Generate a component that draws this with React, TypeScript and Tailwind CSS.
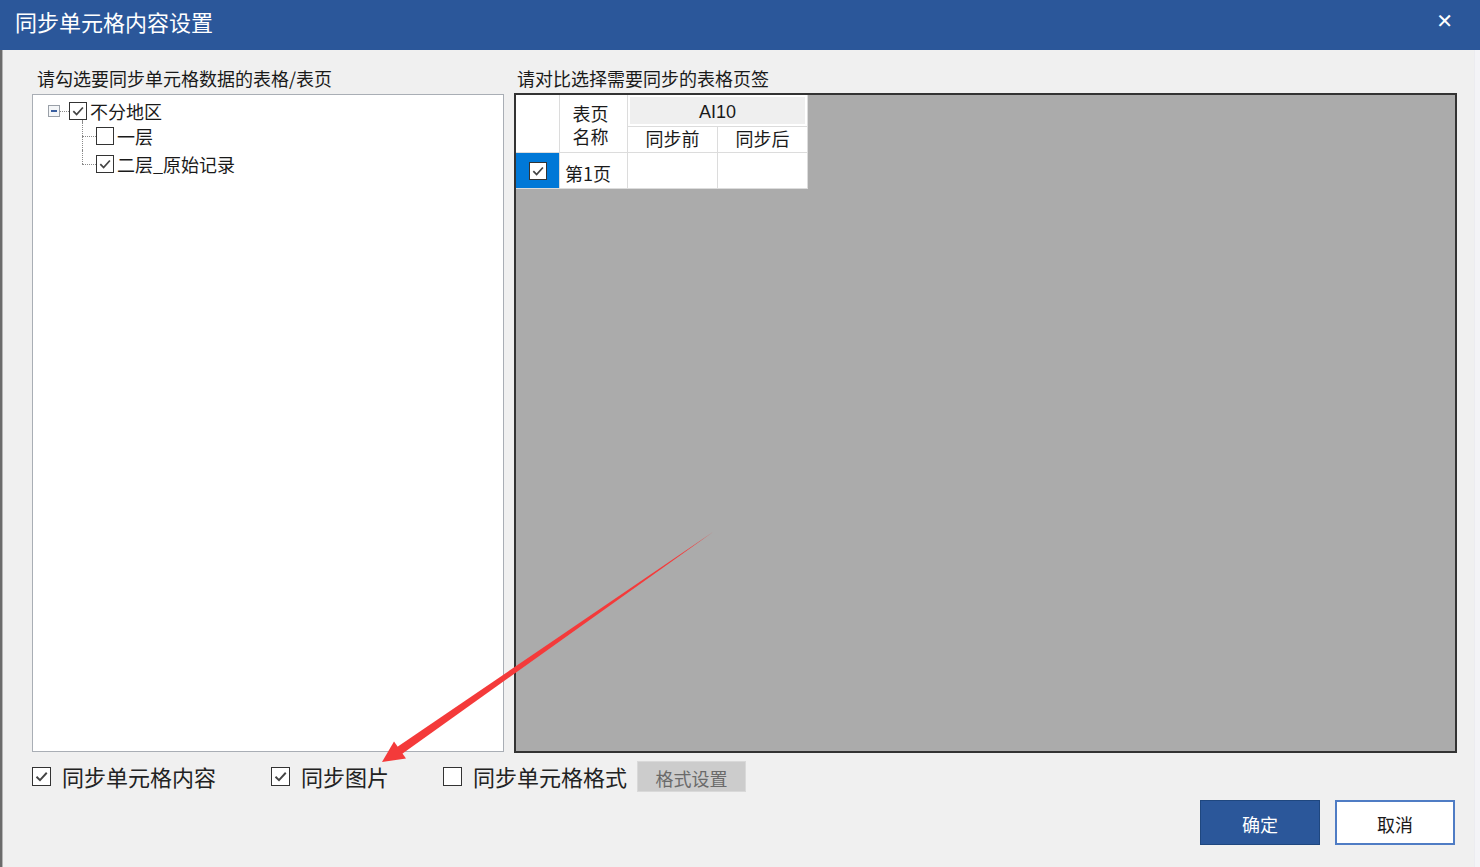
import React from "react";

const FONT = { fontFamily: '"Noto Sans CJK SC", "Noto Sans", sans-serif' };

function Check({ size = 17, checked = false, className = "" }: { size?: number; checked?: boolean; className?: string }) {
  return (
    <span
      className={`inline-flex items-center justify-center shrink-0 bg-white border border-[#333333] ${className}`}
      style={{ width: size, height: size }}
    >
      {checked && (
        <svg width={size - 4} height={size - 4} viewBox="0 0 12 12">
          <path d="M2 6.2 L4.8 9 L10.2 3" fill="none" stroke="#444" strokeWidth="1.5" />
        </svg>
      )}
    </span>
  );
}

function TreeChild({ label, checked, last }: { label: string; checked: boolean; last?: boolean }) {
  return (
    <div className="flex items-stretch h-[28px]">
      <div className="w-[14px] relative shrink-0">
        <div
          className={`absolute left-0 top-0 border-l border-dotted border-[#8a8a8a] ${last ? "h-1/2" : "h-full"}`}
        />
        <div className="absolute left-0 top-1/2 w-full border-t border-dotted border-[#8a8a8a]" />
      </div>
      <div className="flex items-center">
        <Check size={18} checked={checked} />
        <span className="ml-[3px] text-[18px] text-[#1a1a1a] leading-none">{label}</span>
      </div>
    </div>
  );
}

function BottomCheck({ label, checked }: { label: string; checked: boolean }) {
  return (
    <div className="flex items-center">
      <Check size={19} checked={checked} className="border-[#555]" />
      <span className="ml-[11px] text-[22px] text-[#222] leading-none">{label}</span>
    </div>
  );
}

export default function App() {
  return (
    <div className="w-[1480px] h-[867px] bg-[#f0f0f0] relative overflow-hidden flex flex-col" style={FONT}>
      {/* Title bar */}
      <div className="h-[50px] shrink-0 bg-[#2b579a] flex items-center justify-between pl-[15px] pr-[27px] pb-[8px]">
        <span className="text-white text-[22px] leading-none">同步单元格内容设置</span>
        <span className="text-white text-[20px] font-bold leading-none" style={{ fontFamily: '"DejaVu Sans", sans-serif' }}>
          ✕
        </span>
      </div>

      <div className="flex flex-1 min-h-0">
        {/* left edge strip */}
        <div className="w-[3px] bg-[#6b6b6b] border-r border-[#b5b5b5] shrink-0" />

        <div className="flex-1 flex flex-col pl-[29px]">
          {/* Panels */}
          <div className="flex pt-[15px]">
            {/* Left panel */}
            <div className="w-[472px] flex flex-col">
              <div className="h-[29px] pl-[5px] text-[18px] text-[#1a1a1a] leading-[26px]">
                请勾选要同步单元格数据的表格/表页
              </div>
              <div className="h-[658px] bg-white border border-[#a9aeb5] pt-[3px]">
                {/* Root row */}
                <div className="flex items-center h-[26px] pl-[15px]">
                  <span className="w-[12px] h-[12px] border border-[#9aa0a8] bg-[#f4f6f8] flex items-center justify-center shrink-0">
                    <span className="w-[6px] h-[2px] bg-[#3a5fa0]" />
                  </span>
                  <span className="w-[9px] border-t border-dotted border-[#8a8a8a]" />
                  <Check size={18} checked />
                  <span className="ml-[3px] text-[18px] text-[#1a1a1a] leading-none">不分地区</span>
                </div>
                <div className="ml-[49px] -mt-[4px] pt-[2px] relative">
                  <div className="absolute left-0 top-0 h-[4px] border-l border-dotted border-[#8a8a8a]" />
                  <TreeChild label="一层" checked={false} />
                  <TreeChild label="二层_原始记录" checked last />
                </div>
              </div>
            </div>

            {/* Right panel */}
            <div className="w-[943px] ml-[10px] flex flex-col">
              <div className="h-[28px] pl-[3px] text-[18px] text-[#1a1a1a] leading-[26px]">
                请对比选择需要同步的表格页签
              </div>
              <div className="h-[660px] bg-[#ababab] border-2 border-[#333333]">
                <div className="grid grid-cols-[43px_67px_89px_89px] grid-rows-[31px_25px_35px] gap-px bg-[#dcdcdc] w-[292px] pr-px pb-px">
                  <div className="row-span-2 bg-white" />
                  <div className="row-span-2 bg-white flex flex-col items-center justify-center text-[18px] leading-[23px] text-[#1a1a1a] pt-[2px] pr-[6px]">
                    <span>表页</span>
                    <span>名称</span>
                  </div>
                  <div className="col-span-2 bg-white p-[2px]">
                    <div
                      className="w-full h-full bg-[#efefef] flex items-center justify-center text-[18px] font-medium text-[#1a1a1a] pt-[3px]"
                      style={{ fontFamily: '"Liberation Sans", Arial, sans-serif' }}
                    >
                      AI10
                    </div>
                  </div>
                  <div className="bg-white flex items-center justify-center text-[18px] text-[#1a1a1a] leading-none pb-[3px]">同步前</div>
                  <div className="bg-white flex items-center justify-center text-[18px] text-[#1a1a1a] leading-none pb-[3px]">同步后</div>
                  <div className="bg-[#0078d7] flex items-center justify-center">
                    <Check size={18} checked />
                  </div>
                  <div className="bg-white flex items-center pl-[5px] pt-[4px] text-[18px] text-[#1a1a1a] leading-none">
                    第1页
                  </div>
                  <div className="bg-white" />
                  <div className="bg-white" />
                </div>
              </div>
            </div>
          </div>

          {/* Bottom options */}
          <div className="flex items-center h-[30px] mt-[8px]">
            <BottomCheck label="同步单元格内容" checked />
            <div className="ml-[55px]">
              <BottomCheck label="同步图片" checked />
            </div>
            <div className="ml-[54px]">
              <BottomCheck label="同步单元格格式" checked={false} />
            </div>
            <button className="ml-[10px] w-[109px] h-[31px] bg-[#cccccc] border border-[#d9d9d9] text-[18px] text-[#6a6a6a] leading-none flex items-center justify-center pt-[3px]">
              格式设置
            </button>
          </div>

          {/* Action buttons */}
          <div className="flex justify-end mt-[9px] pr-[19px]">
            <button className="w-[120px] h-[45px] bg-[#2b579a] border border-[#1f477f] text-white text-[18px] leading-none flex items-center justify-center pt-[2px]">
              确定
            </button>
            <button className="ml-[15px] w-[120px] h-[45px] bg-white border-2 border-[#4f7cc4] text-[#1a1a1a] text-[18px] leading-none flex items-center justify-center pt-[2px]">
              取消
            </button>
          </div>
        </div>

        {/* right edge strip */}
        <div className="w-[6px] bg-[#f4f4f7] border-l border-[#ececf0] shrink-0" />
      </div>

      {/* Red annotation arrow */}
      <svg className="absolute inset-0 pointer-events-none" width="1480" height="867" viewBox="0 0 1480 867">
        <polygon points="713,532 397,757.5 392,750.5" fill="#f43a3a" />
        <polygon points="382,762 406,758.5 394,741.5" fill="#f43a3a" />
      </svg>
    </div>
  );
}
